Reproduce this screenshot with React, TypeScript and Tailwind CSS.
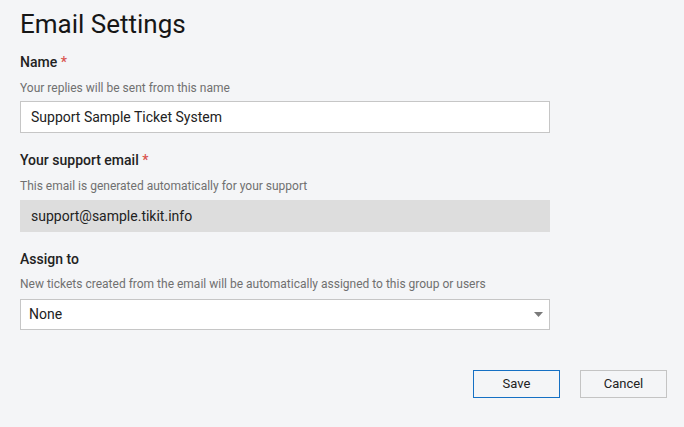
export default function App() {
  return (
    <div
      className="min-h-[427px] w-full bg-[#f4f5f7] px-5 pt-2 text-[#222]"
      style={{ fontFamily: "Roboto, 'Liberation Sans', sans-serif" }}
    >
      <h1 className="text-[26px] leading-[32px] font-normal text-[#161616]">Email Settings</h1>

      {/* Name */}
      <div className="mt-3 w-[530px]">
        <div className="text-[14px] leading-5 font-medium">
          Name <span className="text-[#d9534f]">*</span>
        </div>
        <div className="mt-2 text-[12px] leading-4 text-[#707070]">Your replies will be sent from this name</div>
        <input
          className="mt-[5px] h-8 w-full border border-[#c6c6c6] bg-white px-[10px] text-[14px] text-[#222] outline-none"
          defaultValue="Support Sample Ticket System"
        />
      </div>

      {/* Support email */}
      <div className="mt-[17px] w-[530px]">
        <div className="text-[14px] leading-5 font-medium">
          Your support email <span className="text-[#d9534f]">*</span>
        </div>
        <div className="mt-2 text-[12px] leading-4 text-[#707070]">
          This email is generated automatically for your support
        </div>
        <div className="mt-[6px] flex h-8 w-full items-center bg-[#dddddd] px-[11px] text-[14px] text-[#222]">
          support@sample.tikit.info
        </div>
      </div>

      {/* Assign to */}
      <div className="mt-[17px] w-[530px]">
        <div className="text-[14px] leading-5 font-medium">Assign to</div>
        <div className="mt-[7px] text-[12px] leading-4 text-[#707070]">
          New tickets created from the email will be automatically assigned to this group or users
        </div>
        <div className="mt-[7px] flex h-[31px] w-full items-center justify-between border border-[#c6c6c6] bg-white pl-2 pr-[5px] text-[14px] text-[#222]">
          <span>None</span>
          <svg width="9" height="5" viewBox="0 0 9 5" className="mr-[1px]">
            <path d="M0 0h9L4.5 5z" fill="#7a7a7a" />
          </svg>
        </div>
      </div>

      <div className="mt-10 flex w-[647px] justify-end gap-5">
        <button className="h-7 w-[87px] border border-[#1570c4] bg-[#f4f5f7] text-[13px] text-[#222]">Save</button>
        <button className="h-7 w-[87px] border border-[#c4c4c4] bg-[#f4f5f7] text-[13px] text-[#222]">Cancel</button>
      </div>
    </div>
  );
}
